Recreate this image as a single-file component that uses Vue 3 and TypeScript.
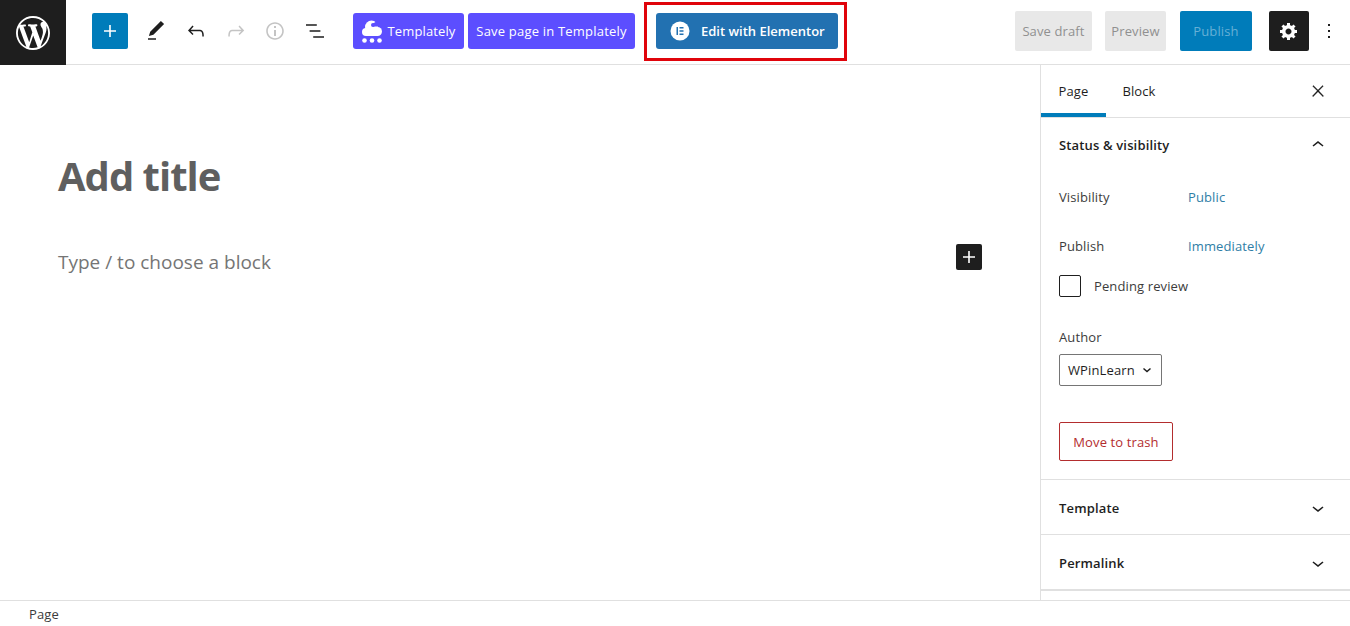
<script setup lang="ts">
const icons = {
  plus: 'M18 11.2h-5.2V6h-1.6v5.2H6v1.6h5.2V18h1.6v-5.2H18z',
  pen: 'M20.1 5.1L16.9 2 6.2 12.7l-1.3 4.4 4.5-1.3L20.1 5.1zM4 20.8h8v-1.5H4v1.5z',
  undo: 'M18.3 11.7c-.6-.6-1.4-.9-2.3-.9H6.7l2.9-3.3-1.1-1-4.5 5L8.5 16l1-1-2.7-2.7H16c.5 0 .9.2 1.3.5 1 1 1 3.4 1 4.5v.3h1.5v-.2c0-1.5 0-4.3-1.5-5.7z',
  redo: 'M15.6 6.5l-1.1 1 2.9 3.3H8c-.9 0-1.7.3-2.3.9-1.4 1.5-1.4 4.2-1.4 5.6v.2h1.5v-.3c0-1.1 0-3.5 1-4.5.3-.3.7-.5 1.3-.5h9.2L14.5 15l1.1 1.1 4.6-4.6-4.6-5z',
  info: 'M12 3.2c-4.8 0-8.8 3.9-8.8 8.8 0 4.8 3.9 8.8 8.8 8.8 4.8 0 8.8-3.9 8.8-8.8 0-4.8-4-8.8-8.8-8.8zm0 16c-4 0-7.2-3.3-7.2-7.2C4.8 8 8 4.8 12 4.8s7.2 3.3 7.2 7.2c0 4-3.2 7.2-7.2 7.2zM11 17h2v-6h-2v6zm0-8h2V7h-2v2z',
  list: 'M13.8 5.2H3v1.5h10.8V5.2zm-3.6 12v1.5H21v-1.5H10.2zm7.2-6H6.6v1.5h10.8v-1.5z',
  kebab: 'M13 19h-2v-2h2v2zm0-6h-2v-2h2v2zm0-6h-2V5h2v2z',
  close: 'M13 11.8l6.1-6.3-1-1-6.1 6.2-6.1-6.2-1 1 6.1 6.3-6.5 6.7 1 1 6.5-6.6 6.5 6.6 1-1z',
  up: 'M6.5 12.4L12 8l5.5 4.4-.9 1.2L12 10l-4.5 3.6-1-1.2z',
  down: 'M17.5 11.6L12 16l-5.5-4.4.9-1.2L12 14l4.5-3.6 1 1.2z',
};

const wpLogo = 'M20 10c0-5.51-4.49-10-10-10C4.48 0 0 4.49 0 10c0 5.52 4.48 10 10 10 5.51 0 10-4.48 10-10zM7.78 15.37L4.37 6.22c.55-.02 1.17-.08 1.17-.08.5-.06.44-1.13-.06-1.11 0 0-1.45.11-2.37.11-.18 0-.37 0-.58-.01C4.12 2.69 6.87 1.11 10 1.11c2.33 0 4.45.87 6.05 2.34-.68-.11-1.65.39-1.65 1.58 0 .74.45 1.36.9 2.1.35.61.55 1.36.55 2.46 0 1.49-1.4 5-1.4 5l-3.03-8.37c.54-.02.82-.17.82-.17.5-.05.44-1.25-.06-1.22 0 0-1.44.12-2.38.12-.87 0-2.33-.12-2.33-.12-.5-.03-.56 1.2-.06 1.22l.92.08 1.26 3.41zM17.41 10c.24-.64.74-1.87.43-4.25.7 1.29 1.05 2.71 1.05 4.25 0 3.29-1.73 6.24-4.4 7.78.97-2.59 1.94-5.2 2.92-7.78zM6.1 18.09C3.12 16.65 1.11 13.53 1.11 10c0-1.3.23-2.48.72-3.59C3.25 10.3 4.67 14.2 6.1 18.09zm4.03-6.63l2.58 6.98c-.86.29-1.76.45-2.71.45-.79 0-1.57-.11-2.29-.33.81-2.38 1.62-4.74 2.42-7.1z';
const cog = 'M18 12h-2.18c-.17.7-.44 1.35-.81 1.93l1.54 1.54-2.1 2.1-1.54-1.54c-.58.36-1.23.63-1.91.79V19H8v-2.18c-.68-.16-1.33-.43-1.91-.79l-1.54 1.54-2.12-2.12 1.54-1.54c-.36-.58-.63-1.23-.79-1.91H1V9.03h2.17c.16-.7.44-1.35.8-1.94L2.43 5.55l2.1-2.1 1.54 1.54c.58-.37 1.24-.64 1.93-.81V2h3v2.18c.68.16 1.33.43 1.91.79l1.54-1.54 2.12 2.12-1.54 1.54c.36.59.64 1.24.8 1.94H18V12zm-8.5 1.5c1.66 0 3-1.34 3-3s-1.34-3-3-3-3 1.34-3 3 1.34 3 3 3z';
</script>

<template>
  <div class="editor">
    <header class="topbar">
      <div class="wp-logo">
        <svg width="34" height="34" viewBox="0 0 20 20"><path :d="wpLogo" fill="#fff" /></svg>
      </div>

      <div class="tools">
        <button class="inserter" type="button">
          <svg width="24" height="24" viewBox="0 0 24 24"><path :d="icons.plus" fill="#fff" /></svg>
        </button>
        <svg class="tool" width="24" height="24" viewBox="0 0 24 24"><path :d="icons.pen" fill="#1e1e1e" /></svg>
        <svg class="tool" width="24" height="24" viewBox="0 0 24 24"><path :d="icons.undo" fill="#1e1e1e" /></svg>
        <svg class="tool tool-tight" width="24" height="24" viewBox="0 0 24 24"><path :d="icons.redo" fill="#c4c4c4" /></svg>
        <svg class="tool" width="24" height="24" viewBox="0 0 24 24"><path :d="icons.info" fill="#c4c4c4" /></svg>
        <svg class="tool" width="24" height="24" viewBox="0 0 24 24"><path :d="icons.list" fill="#1e1e1e" /></svg>
      </div>

      <div class="templately">
        <button class="btn-purple first" type="button">
          <svg width="20" height="23" viewBox="0 0 20 23">
            <circle cx="4" cy="12" r="4" fill="#fff" />
            <circle cx="9.500" cy="7" r="6.500" fill="#fff" />
            <circle cx="15.500" cy="11.500" r="4.500" fill="#fff" />
            <rect x="4" y="10" width="12" height="6" fill="#fff" />
            <circle cx="11" cy="5" r="2" fill="#5c4eff" />
            <path d="M11 3.500 L17 0 L17 6.500 L11 6.500 Z" fill="#5c4eff" />
            <circle cx="2.500" cy="20.500" r="2.300" fill="#fff" />
            <circle cx="10" cy="20.500" r="2.300" fill="#fff" />
            <circle cx="17.500" cy="20.500" r="2.300" fill="#fff" />
          </svg>
          Templately
        </button>
        <button class="btn-purple second" type="button">Save page in Templately</button>
      </div>

      <div class="highlight">
        <button class="btn-elementor" type="button">
          <svg width="20" height="20" viewBox="0 0 20 20">
            <circle cx="10" cy="10" r="9.500" fill="#fff" />
            <rect x="6.500" y="6" width="1.500" height="8" fill="#2271b1" />
            <rect x="9.500" y="6" width="4" height="1.500" fill="#2271b1" />
            <rect x="9.500" y="9.250" width="4" height="1.500" fill="#2271b1" />
            <rect x="9.500" y="12.500" width="4" height="1.500" fill="#2271b1" />
          </svg>
          <span>Edit with Elementor</span>
        </button>
      </div>

      <div class="actions">
        <button class="btn-muted draft" type="button">Save draft</button>
        <button class="btn-muted preview" type="button">Preview</button>
        <button class="btn-publish" type="button">Publish</button>
        <button class="btn-settings" type="button">
          <svg width="20" height="20" viewBox="0 0 20 20"><path :d="cog" fill="#fff" /></svg>
        </button>
        <svg class="kebab" width="24" height="24" viewBox="0 0 24 24"><path :d="icons.kebab" fill="#1e1e1e" /></svg>
      </div>
    </header>

    <div class="body">
      <main class="canvas">
        <h1 class="title">Add title</h1>
        <div class="block-row">
          <p class="placeholder">Type / to choose a block</p>
          <button class="block-add" type="button">
            <svg width="24" height="24" viewBox="0 0 24 24"><path :d="icons.plus" fill="#fff" /></svg>
          </button>
        </div>
      </main>

      <aside class="sidebar">
        <div class="tabs">
          <span class="tab active">Page</span>
          <span class="tab">Block</span>
          <svg class="tab-close" width="24" height="24" viewBox="0 0 24 24"><path :d="icons.close" fill="#1e1e1e" stroke="#1e1e1e" stroke-width=".4" transform="translate(12 12) scale(.75) translate(-12 -12)" /></svg>
        </div>

        <section class="status">
          <div class="panel-head status-head">
            <span>Status &amp; visibility</span>
            <svg width="24" height="24" viewBox="0 0 24 24"><path :d="icons.up" fill="#1e1e1e" /></svg>
          </div>
          <div class="row visibility"><span class="label">Visibility</span><a class="link">Public</a></div>
          <div class="row publish"><span class="label">Publish</span><a class="link">Immediately</a></div>
          <label class="pending"><span class="check"></span>Pending review</label>
          <div class="author-label">Author</div>
          <div class="author-select">
            <span>WPinLearn</span>
            <svg width="12" height="12" viewBox="0 0 24 24"><path d="M5 9l7 6 7-6" fill="none" stroke="#1e1e1e" stroke-width="3" /></svg>
          </div>
          <button class="trash" type="button">Move to trash</button>
        </section>

        <div class="panel-head closed">
          <span>Template</span>
          <svg width="24" height="24" viewBox="0 0 24 24"><path :d="icons.down" fill="#1e1e1e" /></svg>
        </div>
        <div class="panel-head closed last">
          <span>Permalink</span>
          <svg width="24" height="24" viewBox="0 0 24 24"><path :d="icons.down" fill="#1e1e1e" /></svg>
        </div>
      </aside>
    </div>

    <footer class="statusbar">Page</footer>
  </div>
</template>

<style>
html, body {
  margin: 0;
  background: #fff;
}
</style>

<style scoped>
.editor {
  width: 1350px;
  height: 626px;
  display: flex;
  flex-direction: column;
  overflow: hidden;
  font-family: "Open Sans", "Noto Sans", sans-serif;
  font-size: 13px;
  letter-spacing: .12px;
  color: #1e1e1e;
}

button {
  font: inherit;
  letter-spacing: inherit;
  border: none;
  padding: 0;
  display: flex;
  align-items: center;
  justify-content: center;
}

.topbar {
  height: 65px;
  flex: none;
  box-sizing: border-box;
  display: flex;
  align-items: center;
  padding-bottom: 2px;
  border-bottom: 1px solid #e0e0e0;
}

.wp-logo {
  width: 66px;
  height: 65px;
  flex: none;
  align-self: flex-start;
  background: #1e1e1e;
  display: flex;
  align-items: center;
  justify-content: center;
}

.tools {
  display: flex;
  align-items: center;
  margin-left: 26px;
  width: 261px;
  flex: none;
}

.inserter {
  width: 36px;
  height: 36px;
  background: #007cba;
  border-radius: 2px;
  margin-right: 16px;
}

.tool {
  margin-right: 16px;
  flex: none;
}

.tool-tight {
  margin-right: 15px;
}

.templately {
  display: flex;
  gap: 4px;
}

.btn-purple {
  height: 36px;
  background: #5c4eff;
  color: #fff;
  border-radius: 3px;
  font-weight: 500;
}

.first {
  width: 111px;
  gap: 6px;
}

.second {
  width: 167px;
  letter-spacing: .2px;
}

.highlight {
  margin-left: 9px;
  width: 203px;
  height: 59px;
  box-sizing: border-box;
  border: 3px solid #e0040b;
  display: flex;
  align-items: center;
  padding-left: 9px;
}

.btn-elementor {
  width: 182px;
  height: 36px;
  box-sizing: border-box;
  background: #2271b1;
  color: #fff;
  border-radius: 3px;
  justify-content: flex-start;
  padding-left: 14px;
  gap: 11px;
  font-weight: 600;
  letter-spacing: 0;
}

.actions {
  margin-left: auto;
  display: flex;
  align-items: center;
}

.btn-muted {
  height: 40px;
  background: #e8e8e8;
  color: #909090;
  border-radius: 2px;
}

.draft {
  width: 77px;
  margin-right: 13px;
}

.preview {
  width: 61px;
  margin-right: 14px;
}

.btn-publish {
  width: 72px;
  height: 40px;
  background: #007cba;
  color: #66b0d6;
  border-radius: 2px;
  margin-right: 17px;
}

.btn-settings {
  width: 40px;
  height: 40px;
  background: #1e1e1e;
  border-radius: 2px;
}

.kebab {
  margin: 0 9px 0 8px;
}

.body {
  flex: 1;
  min-height: 0;
  display: flex;
}

.canvas {
  flex: 1;
  padding: 0 58px;
}

.title {
  margin: 84px 0 0;
  font-size: 40px;
  line-height: 54px;
  font-weight: 700;
  letter-spacing: -1px;
  color: #5f5f5f;
}

.block-row {
  margin-top: 45px;
  height: 26px;
  display: flex;
  align-items: center;
  justify-content: space-between;
}

.placeholder {
  margin: 2px 0 0;
  font-size: 19px;
  letter-spacing: 0;
  color: #757575;
}

.block-add {
  width: 26px;
  height: 26px;
  margin-bottom: 8px;
  background: #1e1e1e;
  border-radius: 2px;
}

.sidebar {
  width: 310px;
  flex: none;
  box-sizing: border-box;
  border-left: 1px solid #e0e0e0;
}

.tabs {
  height: 53px;
  box-sizing: border-box;
  display: flex;
  align-items: center;
  border-bottom: 1px solid #e0e0e0;
  position: relative;
}

.tab {
  width: 65px;
  text-align: center;
  font-weight: 500;
}

.tab + .tab {
  width: 34px;
  margin-left: 16px;
}

.tab.active::after {
  content: "";
  position: absolute;
  left: 0;
  bottom: 0;
  width: 65px;
  height: 4px;
  background: #007cba;
}

.tab-close {
  margin-left: auto;
  margin-right: 20px;
}

.panel-head {
  display: flex;
  align-items: center;
  justify-content: space-between;
  padding: 0 20px 0 18px;
  font-weight: 600;
  letter-spacing: .15px;
}

.status {
  height: 362px;
  box-sizing: border-box;
  border-bottom: 1px solid #e0e0e0;
}

.status-head {
  height: 54px;
}

.row {
  display: flex;
  padding-left: 18px;
  height: 18px;
  align-items: center;
}

.visibility {
  margin-top: 16px;
}

.publish {
  margin-top: 31px;
}

.label {
  width: 129px;
  color: #3c3c3c;
}

.link {
  color: #2f7ea6;
}

.pending {
  display: flex;
  align-items: center;
  margin: 20px 0 0 18px;
  color: #3c3c3c;
}

.check {
  width: 22px;
  height: 22px;
  box-sizing: border-box;
  border: 1px solid #1e1e1e;
  border-radius: 2px;
  margin-right: 13px;
}

.author-label {
  margin: 31px 0 0 18px;
  height: 18px;
  line-height: 18px;
  color: #3c3c3c;
}

.author-select {
  width: 103px;
  height: 32px;
  box-sizing: border-box;
  margin: 8px 0 0 18px;
  border: 1px solid #757575;
  border-radius: 2px;
  display: flex;
  align-items: center;
  justify-content: space-between;
  padding: 0 8px;
}

.trash {
  width: 114px;
  height: 39px;
  box-sizing: border-box;
  margin: 36px 0 0 18px;
  background: #fff;
  border: 1px solid #b32d2e;
  border-radius: 2px;
  color: #b32d2e;
}

.closed {
  height: 55px;
  box-sizing: border-box;
  padding-top: 2px;
  border-bottom: 1px solid #e0e0e0;
}

.closed.last {
  height: 56px;
  border-bottom-width: 2px;
}

.statusbar {
  height: 26px;
  flex: none;
  box-sizing: border-box;
  border-top: 1px solid #e0e0e0;
  padding-left: 29px;
  line-height: 27px;
  color: #3c3c3c;
}
</style>
